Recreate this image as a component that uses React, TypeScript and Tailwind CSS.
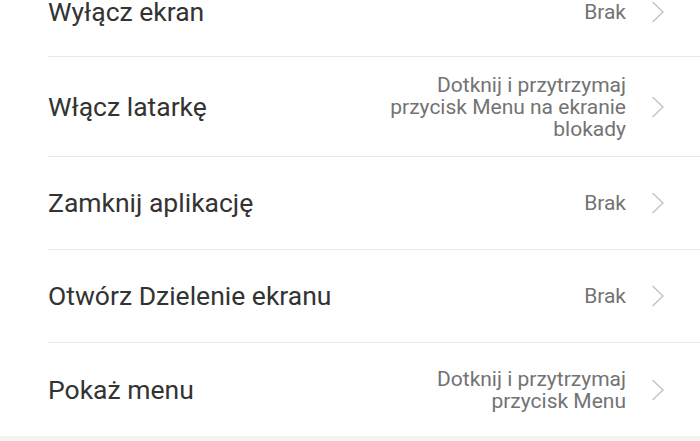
import React from "react";

const rows: { title: string; value: string }[] = [
  { title: "Wyłącz ekran", value: "Brak" },
  { title: "Włącz latarkę", value: "Dotknij i przytrzymaj przycisk Menu na ekranie blokady" },
  { title: "Zamknij aplikację", value: "Brak" },
  { title: "Otwórz Dzielenie ekranu", value: "Brak" },
  { title: "Pokaż menu", value: "Dotknij i przytrzymaj przycisk Menu" },
];

function Chevron() {
  return (
    <svg width="14" height="22" viewBox="0 0 14 22" className="shrink-0" fill="none">
      <path d="M1.5 1 L12 11 L1.5 21" stroke="#c2c2c2" strokeWidth="1.4" strokeLinejoin="miter" />
    </svg>
  );
}

export default function App() {
  return (
    <div
      className="w-[700px] h-[441px] overflow-hidden bg-white"
      style={{ fontFamily: "Roboto, 'Noto Sans', sans-serif" }}
    >
      <div className="-mt-[33px]">
        {rows.map((r, i) => (
          <div
            key={i}
            className={
              "ml-[48px] pr-[35px] py-[16.5px] flex items-center justify-between " +
              (i === 0
                ? "min-h-[90px] border-b border-[#e8e8e8]"
                : i < rows.length - 1
                ? "min-h-[93px] border-b border-[#e8e8e8]"
                : "min-h-[93px]")
            }
          >
            <div className="text-[26.5px] leading-[30px] text-[#333333]">{r.title}</div>
            <div className="flex items-center gap-[25px]">
              <div className="max-w-[245px] text-right text-[21px] leading-[22px] text-[#737373]">
                {r.value}
              </div>
              <Chevron />
            </div>
          </div>
        ))}
        <div className="h-[40px] bg-[#f4f4f4]" />
      </div>
    </div>
  );
}
